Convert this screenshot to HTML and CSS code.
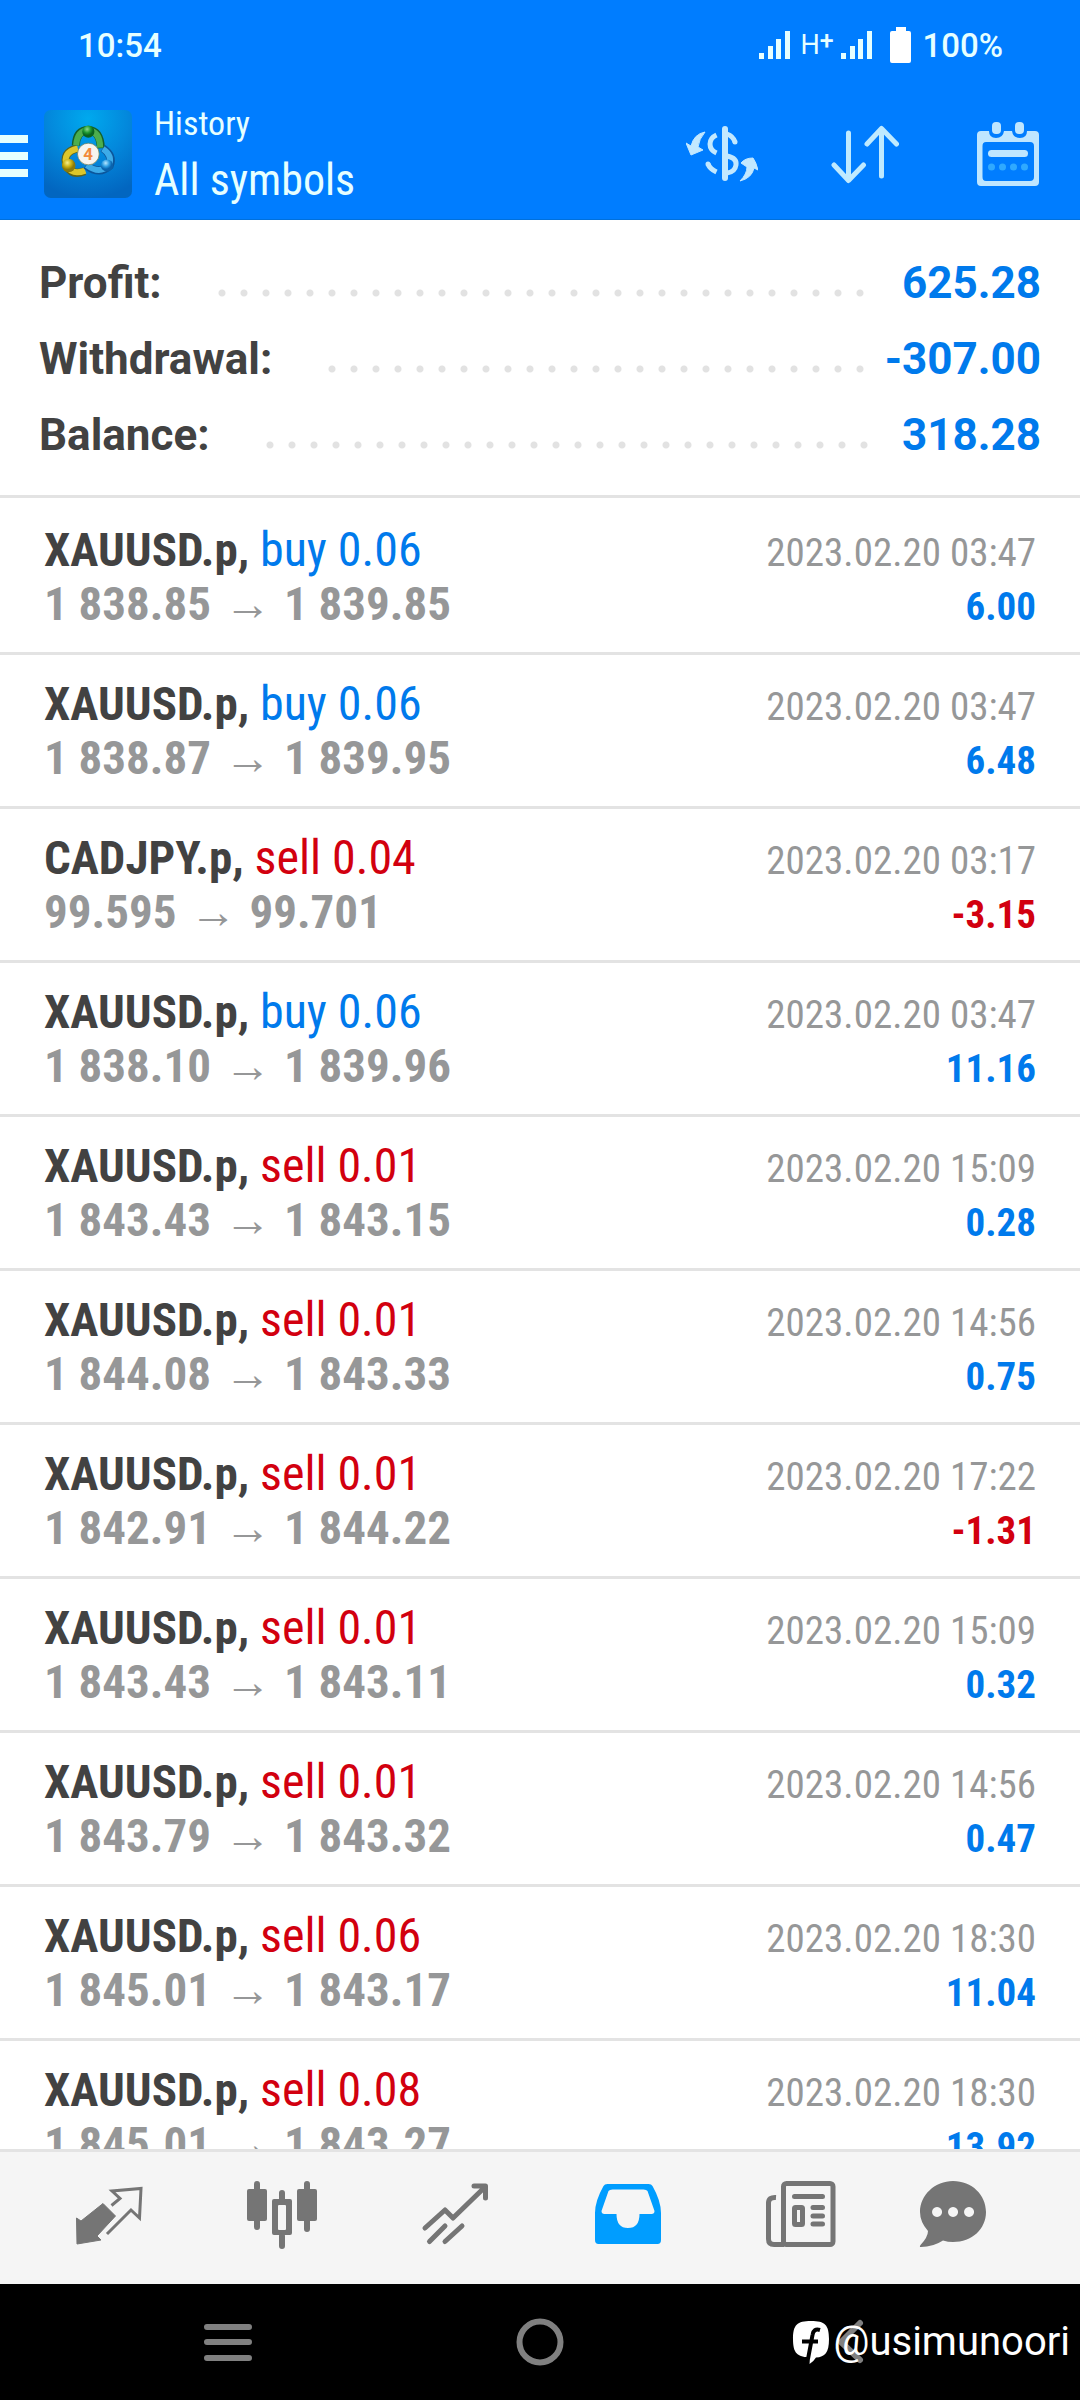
FILE: index.html
```html
<!DOCTYPE html>
<html lang="en">
<head>
<meta charset="utf-8">
<meta name="viewport" content="width=device-width, initial-scale=1">
<title>History</title>
<link rel="stylesheet" href="styles.css">
</head>
<body>
<header class="top">
  <div class="status">
    <span class="clock">10:54</span>
    <svg class="signal" width="32" height="28" viewBox="0 0 32 28"><path d="M0 22h5v6H0zM9 15h5v13H9zM17 8h5v20h-5zM26 0h5v28h-5z"/></svg>
    <span class="net">H<b>+</b></span>
    <svg class="signal" width="32" height="28" viewBox="0 0 32 28"><path d="M0 22h5v6H0zM9 15h5v13H9zM17 8h5v20h-5zM26 0h5v28h-5z"/></svg>
    <svg class="battery" width="22" height="36" viewBox="0 0 22 36"><path d="M6 0h10v4h3q2 0 2 2v28q0 2-2 2H2q-2 0-2-2V6q0-2 2-2h4z"/></svg>
    <span>100%</span>
  </div>
  <div class="appbar">
    <button class="drawer" aria-label="Menu"><svg width="28" height="42" viewBox="0 0 28 42"><path d="M0 0h28v8H0zM0 17h28v8H0zM0 34h28v8H0z"/></svg></button>
    <svg class="logo" width="88" height="88" viewBox="44 33 260 260">
      <defs>
        <radialGradient id="sky" cx=".5" cy=".1" r=".9"><stop offset="0" stop-color="#00a9ee"/><stop offset=".5" stop-color="#0388dc"/><stop offset="1" stop-color="#0266c0"/></radialGradient>
        <radialGradient id="gb" cx=".4" cy=".3"><stop offset="0" stop-color="#8fd98c"/><stop offset=".6" stop-color="#1e9a32"/><stop offset="1" stop-color="#0a6420"/></radialGradient>
        <radialGradient id="yb" cx=".4" cy=".3"><stop offset="0" stop-color="#f6ef8a"/><stop offset=".6" stop-color="#c9b013"/><stop offset="1" stop-color="#8a7a0a"/></radialGradient>
        <radialGradient id="bb" cx=".4" cy=".3"><stop offset="0" stop-color="#b5e6ff"/><stop offset=".6" stop-color="#2a9be0"/><stop offset="1" stop-color="#0a63ad"/></radialGradient>
      </defs>
      <rect x="44" y="33" width="260" height="260" rx="20" fill="url(#sky)"/>
      <g fill="none">
        <path d="M112 200Q96 158 142 146M112 200Q128 228 164 214" stroke="#5e6318" stroke-width="24"/>
        <path d="M112 200Q96 158 144 147M112 200Q128 226 166 212" stroke="#dcc62a" stroke-width="18"/>
        <path d="M138 138Q140 92 175 92Q210 94 212 146" stroke="#14602c" stroke-width="24"/>
        <path d="M139 138Q142 94 175 94Q209 96 210 144" stroke="#4cae4e" stroke-width="18"/>
        <path d="M218 146Q250 168 238 198Q208 226 168 196" stroke="#0c569b" stroke-width="24"/>
        <path d="M218 148Q248 168 236 197Q208 224 170 196" stroke="#3dabe8" stroke-width="17"/>
      </g>
      <circle cx="175" cy="97" r="18" fill="url(#gb)"/>
      <circle cx="117" cy="197" r="20" fill="url(#yb)"/>
      <circle cx="230" cy="197" r="18" fill="url(#bb)"/>
      <circle cx="175" cy="163" r="32" fill="#f7f4ef" stroke="#6a7a50" stroke-width="2"/>
      <text x="174" y="181" text-anchor="middle" class="logo-num">4</text>
    </svg>
    <div class="titles"><span class="screen">History</span><h1>All symbols</h1></div>
    <div class="actions">
      <button aria-label="Symbols"><svg width="72" height="66" viewBox="686 120 72 66">
        <g fill="none" stroke="#c2e8ff" stroke-width="5">
          <path d="M725 128V177" stroke-width="6" stroke-linecap="round"/>
          <path d="M716.500 134Q710 137 710 143Q710 149 716.500 152M716.500 171Q710 168 708 163M727 133Q733 135 735 141M727 155Q737 157 736 164Q735 171 727 172"/>
          <path d="M708 163v.1M735 141v.1" stroke-linecap="round"/>
        </g>
        <path fill="#c2e8ff" stroke="#c2e8ff" stroke-linejoin="round" d="M705 131Q694 133 691 145L686 142L691 154L703 149L698 146Q699 138 705 131ZM740 180Q752 177 754 167L758 169Q756 161 753 157Q745 157 741 162L747 166Q747 173 740 180Z"/>
      </svg></button>
      <button aria-label="Sort"><svg width="68" height="66" viewBox="831 120 68 66"><path fill="none" stroke="#bfeaff" stroke-width="5" stroke-linecap="round" stroke-linejoin="round" d="M848.500 132V179M834 164L848.500 179.500L863.500 164M881.500 175V128M867 143L881.500 127.500L896.500 143"/></svg></button>
      <button aria-label="Period"><svg width="64" height="66" viewBox="976 120 64 66">
        <path fill="#bfe6ff" fill-rule="evenodd" d="M981 130H989Q989 137 996 137Q1003 137 1004 130H1012Q1013 137 1020 137Q1027 137 1027 130H1035Q1039 130 1039 134V181Q1039 185 1035 185H981Q977 185 977 181V134Q977 130 981 130ZM986 141Q982.500 141 982.500 145V176Q982.500 180 986 180H1030Q1034 180 1034 176V145Q1034 141 1030 141Z"/>
        <g fill="#bfe6ff"><rect x="992" y="121" width="9" height="12" rx="4"/><rect x="1015" y="121" width="9" height="12" rx="4"/><rect x="988" y="149" width="40" height="7" rx="3.500"/></g>
        <g fill="#2fa9ff"><circle cx="991.500" cy="166" r="3.500"/><circle cx="1002.500" cy="166" r="3.500"/><circle cx="1013.500" cy="166" r="3.500"/><circle cx="1024.500" cy="166" r="3.500"/></g>
      </svg></button>
    </div>
  </div>
</header>
<main class="content">
  <dl class="summary">
    <div class="total"><dt>Profit:</dt><dd>625.28</dd></div>
    <div class="total"><dt>Withdrawal:</dt><dd>-307.00</dd></div>
    <div class="total"><dt>Balance:</dt><dd>318.28</dd></div>
  </dl>
  <ul class="deals">
    <li><div class="line"><span class="deal"><b>XAUUSD.p,</b> <span class="buy">buy 0.06</span></span><time>2023.02.20 03:47</time></div><div class="line"><span class="prices">1 838.85<i>→</i>1 839.85</span><span class="gain">6.00</span></div></li>
    <li><div class="line"><span class="deal"><b>XAUUSD.p,</b> <span class="buy">buy 0.06</span></span><time>2023.02.20 03:47</time></div><div class="line"><span class="prices">1 838.87<i>→</i>1 839.95</span><span class="gain">6.48</span></div></li>
    <li><div class="line"><span class="deal"><b>CADJPY.p,</b> <span class="sell">sell 0.04</span></span><time>2023.02.20 03:17</time></div><div class="line"><span class="prices">99.595<i>→</i>99.701</span><span class="loss">-3.15</span></div></li>
    <li><div class="line"><span class="deal"><b>XAUUSD.p,</b> <span class="buy">buy 0.06</span></span><time>2023.02.20 03:47</time></div><div class="line"><span class="prices">1 838.10<i>→</i>1 839.96</span><span class="gain">11.16</span></div></li>
    <li><div class="line"><span class="deal"><b>XAUUSD.p,</b> <span class="sell">sell 0.01</span></span><time>2023.02.20 15:09</time></div><div class="line"><span class="prices">1 843.43<i>→</i>1 843.15</span><span class="gain">0.28</span></div></li>
    <li><div class="line"><span class="deal"><b>XAUUSD.p,</b> <span class="sell">sell 0.01</span></span><time>2023.02.20 14:56</time></div><div class="line"><span class="prices">1 844.08<i>→</i>1 843.33</span><span class="gain">0.75</span></div></li>
    <li><div class="line"><span class="deal"><b>XAUUSD.p,</b> <span class="sell">sell 0.01</span></span><time>2023.02.20 17:22</time></div><div class="line"><span class="prices">1 842.91<i>→</i>1 844.22</span><span class="loss">-1.31</span></div></li>
    <li><div class="line"><span class="deal"><b>XAUUSD.p,</b> <span class="sell">sell 0.01</span></span><time>2023.02.20 15:09</time></div><div class="line"><span class="prices">1 843.43<i>→</i>1 843.11</span><span class="gain">0.32</span></div></li>
    <li><div class="line"><span class="deal"><b>XAUUSD.p,</b> <span class="sell">sell 0.01</span></span><time>2023.02.20 14:56</time></div><div class="line"><span class="prices">1 843.79<i>→</i>1 843.32</span><span class="gain">0.47</span></div></li>
    <li><div class="line"><span class="deal"><b>XAUUSD.p,</b> <span class="sell">sell 0.06</span></span><time>2023.02.20 18:30</time></div><div class="line"><span class="prices">1 845.01<i>→</i>1 843.17</span><span class="gain">11.04</span></div></li>
    <li><div class="line"><span class="deal"><b>XAUUSD.p,</b> <span class="sell">sell 0.08</span></span><time>2023.02.20 18:30</time></div><div class="line"><span class="prices">1 845.01<i>→</i>1 843.27</span><span class="gain">13.92</span></div></li>
  </ul>
</main>
<nav class="tabs">
  <button aria-label="Quotes"><svg width="72" height="72" viewBox="72 160 72 72"><path fill="#757575" stroke="#757575" stroke-width="1" stroke-linejoin="round" d="M75.500 199L80 202L102 184.500L114.500 197L96 217L100 221L76 225Z"/><path fill="none" stroke="#757575" stroke-width="3" d="M110.500 186.500L119 179.500L111 172L140 169.500L138.500 199L130 191L106 215"/></svg></button>
  <button aria-label="Chart"><svg width="72" height="72" viewBox="245 160 72 72"><g fill="#757575"><rect x="246" y="170" width="20" height="32" rx="2"/><rect x="296" y="170" width="20" height="32" rx="2"/><path fill-rule="evenodd" d="M273 180h16q2 0 2 2v32q0 2-2 2h-16q-2 0-2-2v-32q0-2 2-2zm5 6q-1 0-1 1v23q0 1 1 1h6q1 0 1-1v-23q0-1-1-1z"/></g><path stroke="#757575" stroke-width="6" stroke-linecap="round" d="M256 165V208M306 165V210M281 174V180M281 217V227"/></svg></button>
  <button aria-label="Trade"><svg width="72" height="72" viewBox="418 160 72 72"><path fill="none" stroke="#757575" stroke-width="5" stroke-linecap="round" stroke-linejoin="round" d="M424 209L444 191L452 199L484 168M473 167H484.500V179M428.500 222.500L444 207M444 222.500L461 207"/></svg></button>
  <button aria-label="History" aria-current="page"><svg width="72" height="72" viewBox="591.500 160 72 72"><path fill="#009dff" fill-rule="evenodd" d="M607 165H648Q651 165 652 167Q660.500 182 660.500 194V221Q660.500 225 657 225H598Q594.500 225 594.500 221V194Q594.500 182 603 167Q604 165 607 165ZM612 170.500Q609 170.500 608 172L601 192Q601 195 604 195H616Q616 209 627.500 209Q639 209 639 195H651Q654 195 654 192L647 172Q646 170.500 643 170.500Z"/></svg></button>
  <button aria-label="News"><svg width="72" height="72" viewBox="765 160 72 72"><g fill="none" stroke="#757575" stroke-width="5"><rect x="783.500" y="164.500" width="49.500" height="61" rx="3"/><path d="M776 178.500Q768.500 178 768.500 184V220Q768.500 225.500 774 225.500H784"/><path stroke-linecap="round" d="M794.500 177.500H822.500M813 188.500H822.500M813 197H822.500M813 205H822.500"/><rect x="794.500" y="188.500" width="8" height="17" rx="1"/></g></svg></button>
  <button aria-label="Messages"><svg width="72" height="72" viewBox="917 160 72 72"><path fill="#757575" fill-rule="evenodd" d="M953 162C972 162 986 176 986 193C986 210 972 223 953 223Q948 223 943 221.500Q933 228 921 228Q919 228 920.500 226Q928 218 928 212Q920 203 920 193C920 176 935 162 953 162ZM937 188a5 5 0 1 0 .1 0ZM953 188a5 5 0 1 0 .1 0ZM969 188a5 5 0 1 0 .1 0Z"/></svg></button>
</nav>
<footer class="system">
  <button aria-label="Recent apps"><svg width="50" height="48" viewBox="0 0 50 48"><path stroke="#808080" stroke-width="6" stroke-linecap="round" d="M4 9H46M4 24H46M4 40H46"/></svg></button>
  <button aria-label="Home"><svg width="48" height="48" viewBox="0 0 48 48"><circle cx="24" cy="24" r="20.500" fill="none" stroke="#808080" stroke-width="6"/></svg></button>
  <button aria-label="Back"><svg width="50" height="48" viewBox="0 0 50 48"><path fill="none" stroke="#808080" stroke-width="6" stroke-linecap="round" stroke-linejoin="round" d="M33 5L14 24L33 42"/></svg></button>
  <div class="mark">
    <svg width="38" height="44" viewBox="791 2321 38 44"><path fill="#fff" d="M810 2322C824 2322 828 2326 828 2340C828 2354 824 2358 815 2358.500Q813 2362 808.500 2365L809 2358.500C796 2358 792 2354 792 2340C792 2326 796 2322 810 2322Z"/><path fill="none" stroke="#000" stroke-width="4" d="M819 2331Q812.500 2329 811.500 2336L807 2360M801 2342.500H817"/></svg>
    <span>@usimunoori</span>
  </div>
</footer>
</body>
</html>
```
FILE: styles.css
```css
* { box-sizing: border-box; margin: 0; padding: 0; }

body {
  display: flex;
  flex-direction: column;
  height: 100vh;
  background: #fff;
  font-family: "Roboto Condensed", "Liberation Sans Narrow", Roboto, sans-serif;
  color: #424242;
}

button { display: flex; align-items: center; justify-content: center; border: 0; background: none; }
svg { display: block; flex: none; }

.top { background: #007dff; color: #e6ffff; border-bottom: 1px solid #0070dc; }

.status {
  display: flex;
  align-items: center;
  height: 88px;
  padding: 2px 77px 0 78px;
  font: 500 33px Roboto, sans-serif;
}
.clock { margin-right: auto; }
.signal { fill: #e6ffff; }
.net { display: flex; align-items: center; width: 32px; height: 30px; margin: 0 9px; font-weight: 400; font-size: 27px; }
.net b { height: 38px; font-size: 25px; font-weight: 500; }
.battery { fill: #fff; margin: 0 10px 0 17px; }

.appbar { display: flex; align-items: center; height: 131px; padding-right: 40px; }
.drawer svg { fill: #e6ffff; }
.drawer { margin-top: 4px; }
.logo { margin: 0 22px 0 16px; }
.logo-num { font: bold 50px Roboto, sans-serif; fill: #f28a3c; }
.titles { display: flex; flex-direction: column; padding-bottom: 8px; }
.screen { font-size: 34px; line-height: 60px; }
h1 { font-size: 44px; font-weight: 400; line-height: 54px; }
.actions { display: flex; gap: 73px; margin-left: auto; }
.actions button:last-child { margin-left: 4px; }

.content { flex: 1; min-height: 0; overflow: hidden; }

.summary { padding: 25px 39px 22px; font: bold 44px/76px Roboto, sans-serif; }
.total { display: flex; }
.total::after {
  content: "";
  order: 1;
  flex: 1;
  margin-left: 56px;
  background: radial-gradient(circle at 4px 48px, #e2e2e2 3px, transparent 4px) 0 0 / 22px 76px repeat-x;
}
.total dd { order: 2; width: 168px; text-align: right; color: #007aec; }

.deals { list-style: none; }
.deals li { padding: 22px 44px 21px; border-top: 3px solid #e3e3e3; }
.deals li:first-child { padding-top: 25px; }
.line { display: flex; justify-content: space-between; align-items: baseline; height: 54px; line-height: 54px; white-space: nowrap; }
.deal, .prices { font-size: 47px; }
.buy, .sell { font-size: 48px; }
.prices { font-weight: 700; color: #969798; }
.prices i { margin: 0 13px; font-style: normal; font-weight: 400; line-height: 0; }
.buy, .gain { color: #007aec; }
.sell, .loss { color: #d2000f; }
time { font-size: 39px; color: #969798; }
.gain, .loss { font-size: 39px; font-weight: 700; }

.tabs {
  display: grid;
  grid-template-columns: repeat(5, 173fr) 131fr;
  height: 135px;
  padding: 0 62px 6px 22px;
  border-top: 3px solid #e3e3e3;
  background: #f5f5f5;
}

.system {
  position: relative;
  display: flex;
  justify-content: space-between;
  align-items: center;
  height: 116px;
  padding: 0 203px;
  background: #000;
}
.mark {
  position: absolute;
  right: 10px;
  top: 30px;
  display: flex;
  align-items: center;
  gap: 4px;
  color: #fff;
  font: 40px/56px Roboto, sans-serif;
}
```
